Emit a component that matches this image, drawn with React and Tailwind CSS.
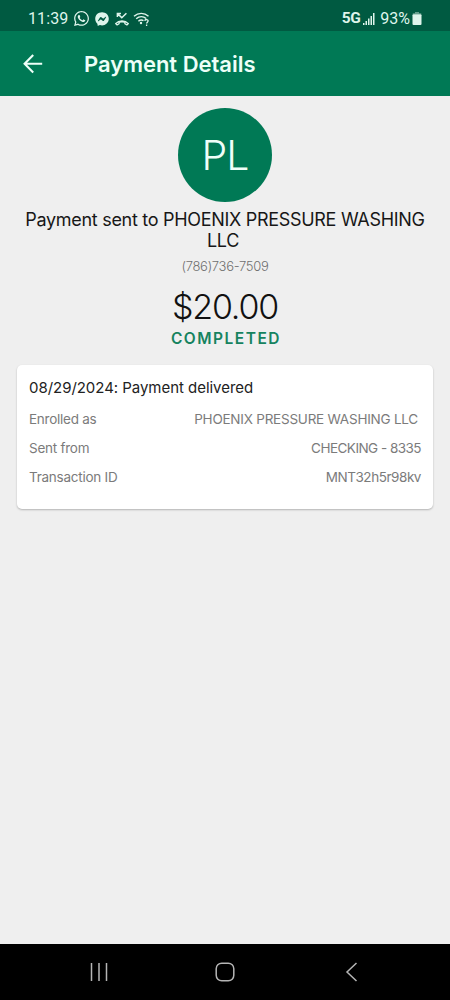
import { FaWhatsapp, FaFacebookMessenger } from "react-icons/fa";

const details = [
  { label: "Enrolled as", value: "PHOENIX PRESSURE WASHING LLC", className: "mr-[3px] tracking-[-0.23px]" },
  { label: "Sent from", value: "CHECKING - 8335", className: "tracking-[-0.53px]" },
  { label: "Transaction ID", value: "MNT32h5r98kv", className: "tracking-[-0.45px]" },
];

function MissedCallIcon() {
  return (
    <svg width="16" height="16" viewBox="0 0 16 16" fill="none" stroke="currentColor">
      <path d="M3.6 2.6 7.8 6.8 12.4 2.2M3.4 6V2.4H7" strokeWidth="1.5" />
      <path
        d="M1.6 12.6C5 8.9 11 8.9 14.4 12.6L12.9 13.9 10.9 12.7V11.2C9 10.6 7 10.6 5.1 11.2V12.7L3.1 13.9Z"
        strokeWidth="1.3"
        strokeLinejoin="round"
      />
    </svg>
  );
}

function WifiIcon() {
  return (
    <svg width="17" height="16" viewBox="0 0 17 16" fill="none" stroke="currentColor" strokeWidth="1.4">
      <path d="M1 5.3C5.2 1.4 11.3 1.4 15.5 5.3" />
      <path d="M3.2 7.8C6.2 5.2 10.3 5.2 13.2 7.5" />
      <path d="M5.4 10.2C7 8.8 9 8.7 10.5 9.6" />
      <circle cx="8" cy="12" r="1.2" fill="currentColor" stroke="none" />
      <path d="M11.8 9.9C12 8 15.3 8.1 15.1 10 15 11.2 13.6 11.3 13.6 12.6M13.6 13.6V15" strokeWidth="1.3" />
    </svg>
  );
}

function SignalIcon() {
  return (
    <svg width="12" height="12" viewBox="0 0 12 12" fill="currentColor">
      <path d="M0 10h1.5v2H0zM2.5 8H4v4H2.5zM5 5.5h1.5V12H5zM7.5 3H9v9H7.5zM10 0h1.5v12H10z" />
    </svg>
  );
}

function BatteryIcon() {
  return (
    <svg width="10" height="13" viewBox="0 0 10 13" fill="currentColor">
      <path d="M3 0h4v1.2h1.5Q9.5 1.2 9.5 2.3H.5Q.5 1.2 1.5 1.2H3z" opacity=".45" />
      <rect x=".5" y="2.2" width="9" height="10.8" rx="1" />
    </svg>
  );
}

function StatusBar() {
  return (
    <div className="flex h-[31px] items-center justify-between bg-[#005a41] pt-[6px] pr-[28px] pl-[28px] font-[Roboto,sans-serif] text-base text-[#dff5ec]">
      <div className="flex items-center">
        <span className="w-[45px] tracking-[0.1px]">11:39</span>
        <FaWhatsapp className="mr-[5px] size-[17px]" />
        <FaFacebookMessenger className="mr-[5px] size-[14px]" />
        <MissedCallIcon />
        <span className="ml-[3px]">
          <WifiIcon />
        </span>
      </div>
      <div className="flex items-center">
        <span className="mr-[3px] text-[15.5px] font-bold tracking-[-0.5px]">5G</span>
        <SignalIcon />
        <span className="mr-[2px] ml-[5px]">93%</span>
        <BatteryIcon />
      </div>
    </div>
  );
}

function Header() {
  return (
    <header className="flex h-[65px] items-center bg-[#007955] pl-[23px] text-[#edfff8]">
      <svg width="20" height="20" viewBox="0 0 20 20" fill="none" stroke="currentColor" strokeWidth="2.1">
        <path d="M19.2 9.8H2M10.2 1 1.6 9.8l8.6 8.6" />
      </svg>
      <h1 className="mt-px ml-[41px] text-[22px] font-semibold tracking-[-0.02px] whitespace-nowrap">Payment Details</h1>
    </header>
  );
}

function NavigationBar() {
  return (
    <nav className="flex h-[56px] items-center justify-between bg-black px-[90px] text-[#b5b5b5]">
      <svg width="18" height="18" viewBox="0 0 18 18" stroke="currentColor" strokeWidth="1.5">
        <path d="M1.5 0v18M9 0v18M16.5 0v18" />
      </svg>
      <svg width="20" height="20" viewBox="0 0 20 20" fill="none" stroke="currentColor" strokeWidth="1.5">
        <rect x="1.2" y="1.2" width="17.6" height="17.6" rx="5.5" />
      </svg>
      <svg width="18" height="20" viewBox="0 0 18 20" fill="none" stroke="currentColor" strokeWidth="1.5">
        <path d="M14.5 1 5 10l9.5 9" />
      </svg>
    </nav>
  );
}

export default function App() {
  return (
    <div className="flex h-[1000px] w-[450px] flex-col overflow-hidden bg-[#efefef] font-[Inter,sans-serif]">
      <StatusBar />
      <Header />

      <main className="flex flex-1 flex-col items-center pt-3">
        <div className="flex size-[94px] shrink-0 items-center justify-center rounded-full bg-[#007955] pt-px text-[41px] font-light tracking-[-1px] text-[#effff9]">
          PL
        </div>
        <h2 className="mt-[7px] text-center text-[18px] leading-[21px] tracking-[-0.3px] text-[#171717]">
          <span className="block whitespace-nowrap">Payment sent to PHOENIX PRESSURE WASHING</span>
          <span className="mr-1 block">LLC</span>
        </h2>
        <p className="mt-[5px] text-[13px] leading-5 font-light tracking-[-0.3px] text-[#707070]">(786)736-7509</p>
        <p className="mt-[11px] text-[34px] leading-10 font-light tracking-[-1.2px] text-[#111]">$20.00</p>
        <p className="mt-[2px] pl-[2px] text-[15.5px] leading-5 font-semibold tracking-[1.5px] text-[#16835f]">
          COMPLETED
        </p>

        <section className="mt-4 h-[144px] w-[416px] rounded-[5px] bg-white px-3 pt-[13px] shadow-[0_1px_2px_rgba(0,0,0,0.25)]">
          <h3 className="text-[15px] leading-5 tracking-[-0.04px] whitespace-nowrap text-[#222]">
            08/29/2024: Payment delivered
          </h3>
          <dl className="mt-[7px]">
            {details.map((item) => (
              <div key={item.label} className="flex h-[29px] items-center justify-between text-[13.5px] text-[#7b7b7b]">
                <dt className="tracking-[-0.25px]">{item.label}</dt>
                <dd className={item.className}>{item.value}</dd>
              </div>
            ))}
          </dl>
        </section>
      </main>

      <NavigationBar />
    </div>
  );
}
